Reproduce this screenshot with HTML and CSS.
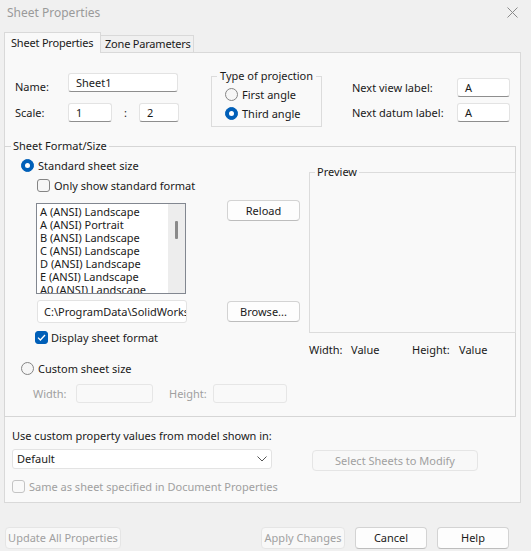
FILE: index.html
```html
<!DOCTYPE html>
<html>
<head>
<meta charset="utf-8">
<title>Sheet Properties</title>
<link rel="stylesheet" href="styles.css">
</head>
<body>
<div class="dialog">
  <div class="titlebar">
    <span class="title">Sheet Properties</span>
    <svg class="close" width="11" height="11" viewBox="0 0 11 11"><path d="M0.5 0.5 L10.5 10.5 M10.5 0.5 L0.5 10.5" stroke="#8a8a8a" stroke-width="1" fill="none"/></svg>
  </div>
  <div class="tabs">
    <div class="tab active">Sheet Properties</div>
    <div class="tab">Zone Parameters</div>
  </div>
  <div class="panel">
    <div class="top">
      <div class="namecol">
        <div class="frow">
          <span class="lbl-name low">Name:</span>
          <div class="input w-name">Sheet1</div>
        </div>
        <div class="frow r2">
          <span class="lbl-name">Scale:</span>
          <div class="input w-s1">1</div>
          <span class="colon">:</span>
          <div class="input w-s2">2</div>
        </div>
      </div>
      <fieldset class="group proj">
        <legend>Type of projection</legend>
        <div class="opt first"><span class="radio"></span>First angle</div>
        <div class="opt second"><span class="radio on"></span>Third angle</div>
      </fieldset>
      <div class="labelcol">
        <div class="frow">
          <span class="lbl-next">Next view label:</span>
          <div class="input w-a">A</div>
        </div>
        <div class="frow r2b">
          <span class="lbl-next">Next datum label:</span>
          <div class="input w-a">A</div>
        </div>
      </div>
    </div>

    <fieldset class="group format">
      <legend>Sheet Format/Size</legend>
      <div class="format-grid">
        <div class="fleft">
          <div class="opt std"><span class="radio on"></span>Standard sheet size</div>
          <div class="opt onlystd"><span class="check"></span>Only show standard format</div>
          <div class="listrow">
            <div class="listbox">
              <div class="items">
                <div class="item">A (ANSI) Landscape</div>
                <div class="item">A (ANSI) Portrait</div>
                <div class="item">B (ANSI) Landscape</div>
                <div class="item">C (ANSI) Landscape</div>
                <div class="item">D (ANSI) Landscape</div>
                <div class="item">E (ANSI) Landscape</div>
                <div class="item">A0 (ANSI) Landscape</div>
              </div>
              <div class="scrollbar"><span class="thumb"></span></div>
            </div>
            <div class="btn reload">Reload</div>
          </div>
          <div class="pathrow">
            <div class="input path">C:\ProgramData\SolidWorks</div>
            <div class="btn browse">Browse...</div>
          </div>
          <div class="opt display"><span class="check on"><svg width="9" height="7" viewBox="0 0 9 7"><path d="M1 3.6 L3.4 6 L8 1" stroke="#fff" stroke-width="1.3" fill="none"/></svg></span>Display sheet format</div>
          <div class="opt custom"><span class="radio"></span>Custom sheet size</div>
          <div class="sizerow">
            <span class="dis lbl-w">Width:</span>
            <div class="input disabled w-w"></div>
            <span class="dis lbl-h">Height:</span>
            <div class="input disabled w-h"></div>
          </div>
        </div>
        <div class="fright">
          <fieldset class="group preview">
            <legend>Preview</legend>
          </fieldset>
          <div class="dims">
            <span class="d-wl">Width:</span><span class="d-wv">Value</span><span class="d-hl">Height:</span><span>Value</span>
          </div>
        </div>
      </div>
    </fieldset>

    <div class="custom-sec">
      <div class="cp-label">Use custom property values from model shown in:</div>
      <div class="cp-row">
        <div class="input select">Default<svg class="chev" width="10" height="6" viewBox="0 0 10 6"><path d="M0.5 0.5 L5 5 L9.5 0.5" stroke="#555" stroke-width="1" fill="none"/></svg></div>
        <div class="btn disabled selsheets">Select Sheets to Modify</div>
      </div>
      <div class="opt same dis"><span class="check dimcheck"></span>Same as sheet specified in Document Properties</div>
    </div>
  </div>
  <div class="footer">
    <div class="btn disabled update">Update All Properties</div>
    <div class="footer-right">
      <div class="btn disabled apply">Apply Changes</div>
      <div class="btn cancel">Cancel</div>
      <div class="btn help">Help</div>
    </div>
  </div>
</div>
</body>
</html>
```
FILE: styles.css
```css
* { box-sizing: border-box; }
html, body { margin: 0; padding: 0; }
body {
  width: 531px;
  height: 551px;
  overflow: hidden;
  background: #f0f0f0;
  font-family: "Noto Sans", "Open Sans", sans-serif;
  font-size: 11px;
  color: #1a1a1a;
}
.dialog { width: 531px; height: 551px; }

.titlebar {
  height: 24px;
  display: flex;
  align-items: center;
  justify-content: space-between;
  padding: 0 13px 0 7px;
}
.title { font-size: 12px; color: #9a9a9a; }

.tabs {
  display: flex;
  align-items: flex-end;
  margin: 8px 0 0 4px;
  height: 20px;
}
.tab {
  height: 17px;
  line-height: 16px;
  padding: 0 0 0 4px;
  border: 1px solid #d9d9d9;
  border-left: none;
  border-bottom: none;
  background: #f0f0f0;
  width: 93px;
  white-space: nowrap;
  overflow: hidden;
  letter-spacing: -0.2px;
}
.tab.active {
  height: 21px;
  line-height: 20px;
  width: 97px;
  padding: 0 0 0 6px;
  border-left: 1px solid #d9d9d9;
  border-right: 1px solid #d9d9d9;
  background: #f9f9f9;
  margin-bottom: -1px;
  position: relative;
  z-index: 1;
}

.panel {
  margin-left: 4px;
  width: 517px;
  height: 451px;
  background: #f9f9f9;
  border: 1px solid #d9d9d9;
}

.input {
  height: 19px;
  background: #ffffff;
  border: 1px solid #e3e3e3;
  border-bottom-color: #8e8e8e;
  border-radius: 3px;
  padding: 0 0 0 7px;
  line-height: 17px;
  white-space: nowrap;
  overflow: hidden;
}
.input.disabled { background: #f9f9f9; border-color: #e6e6e6; }

/* top section */
.top { display: flex; height: 85px; }
.namecol { margin: 20px 0 0 10px; }
.frow { display: flex; align-items: center; height: 19px; }
.frow.r2 { margin-top: 11px; }
.frow.r2b { margin-top: 6px; }
.lbl-name { width: 53px; }
.lbl-name.low { padding-top: 8px; }
.w-name { width: 110px; }
.w-s1 { width: 44px; }
.colon { width: 27px; text-align: center; }
.w-s2 { width: 40px; }

.group {
  margin: 0;
  padding: 0;
  border: 1px solid #dcdcdc;
  min-width: 0;
}
.group legend {
  padding: 0 2px;
  margin-left: 6px;
  line-height: 16px;
}
.proj {
  margin: 15px 0 0 32px;
  width: 111px;
  height: 59px;
}
.proj legend { margin-left: 5px; padding: 0 3px; }

.opt { display: flex; align-items: center; height: 16px; white-space: nowrap; }
.proj .opt { margin-left: 13px; }
.proj .first { margin-top: 2px; }
.proj .second { margin-top: 3px; }

.radio {
  width: 13px;
  height: 13px;
  border-radius: 50%;
  border: 1px solid #858585;
  background: #f6f6f6;
  margin-right: 4px;
  flex: none;
  display: inline-flex;
  align-items: center;
  justify-content: center;
}
.radio.on { background: #005fb8; border-color: #005fb8; }
.radio.on::after {
  content: "";
  width: 5px;
  height: 5px;
  border-radius: 50%;
  background: #ffffff;
}
.check {
  width: 13px;
  height: 13px;
  border-radius: 3px;
  border: 1px solid #858585;
  background: #f6f6f6;
  margin-right: 4px;
  flex: none;
  display: inline-flex;
  align-items: center;
  justify-content: center;
}
.check.on { background: #005fb8; border-color: #005fb8; }
.check.dimcheck { border-color: #c4c4c4; background: #f9f9f9; }

.labelcol { margin: 25px 0 0 30px; }
.lbl-next { width: 105px; }
.w-a { width: 53px; }

/* format group */
.format {
  margin-left: -1px;
  width: 512px;
  border-color: #d6d6d6;
}
.format legend { margin-left: 6px; padding: 0 2px; }
.format-grid { display: grid; grid-template-columns: 304px 1fr; }
.fleft { padding-bottom: 13px; }
.std { margin: 3px 0 0 16px; }
.onlystd { margin: 4px 0 0 32px; }
.listrow { display: flex; align-items: flex-start; margin: 10px 0 0 31px; }
.listbox {
  width: 150px;
  height: 91px;
  border: 1px solid #828790;
  background: #ffffff;
  display: flex;
  overflow: hidden;
}
.items { flex: 1; padding: 1px 0 0 3px; overflow: hidden; }
.item { height: 13px; line-height: 13px; white-space: nowrap; }
.scrollbar {
  width: 17px;
  background: #ededed;
  display: flex;
  justify-content: center;
  padding-top: 17px;
}
.thumb { width: 3px; height: 18px; background: #8a8a8a; border-radius: 1px; }

.btn {
  height: 21px;
  line-height: 19px;
  text-align: center;
  background: #fdfdfd;
  border: 1px solid #d3d3d3;
  border-bottom-color: #bdbdbd;
  border-radius: 4px;
  white-space: nowrap;
}
.btn.disabled {
  background: #f8f8f8;
  border-color: #e5e5e5;
  color: #a0a0a0;
}
.reload { width: 73px; margin: -3px 0 0 41px; }

.pathrow { display: flex; align-items: flex-start; margin: 6px 0 0 32px; }
.path { width: 150px; height: 23px; line-height: 21px; padding-left: 6px; border-bottom-color: #e3e3e3; }
.browse { width: 73px; margin: 1px 0 0 40px; }

.display { margin: 6px 0 0 30px; }
.display .check { margin-right: 3px; }
.custom { margin: 15px 0 0 16px; }
.sizerow { display: flex; align-items: center; height: 19px; margin: 8px 0 0 28px; }
.dis { color: #a0a0a0; }
.lbl-w { width: 43px; }
.w-w { width: 77px; }
.lbl-h { width: 44px; margin-left: 16px; }
.w-h { width: 74px; }

.fright { display: flex; flex-direction: column; }
.preview {
  margin: 10px -1px 0 0;
  height: 169px;
}
.preview legend { margin-left: 5px; padding: 0 2px; }
.dims { display: flex; margin-top: 9px; line-height: 16px; }
.d-wl { width: 42px; }
.d-wv { width: 61px; }
.d-hl { width: 47px; }

/* custom property section */
.custom-sec { padding-left: 7px; }
.cp-label { margin-top: 11px; line-height: 16px; }
.cp-row { display: flex; align-items: flex-start; margin-top: 5px; }
.select {
  width: 260px;
  height: 20px;
  line-height: 18px;
  padding-left: 4px;
  border-bottom-color: #e3e3e3;
  display: flex;
  align-items: center;
  justify-content: space-between;
  padding-right: 4px;
}
.chev { flex: none; }
.selsheets { width: 166px; margin: 1px 0 0 40px; }
.same { margin-top: 7px; }

/* footer */
.footer {
  display: flex;
  justify-content: space-between;
  margin-top: 24px;
  padding: 0 22px 0 5px;
}
.footer .btn { height: 22px; line-height: 20px; }
.footer-right { display: flex; gap: 10px; }
.update { width: 116px; }
.apply { width: 84px; }
.cancel { width: 72px; }
.help { width: 72px; }
```
